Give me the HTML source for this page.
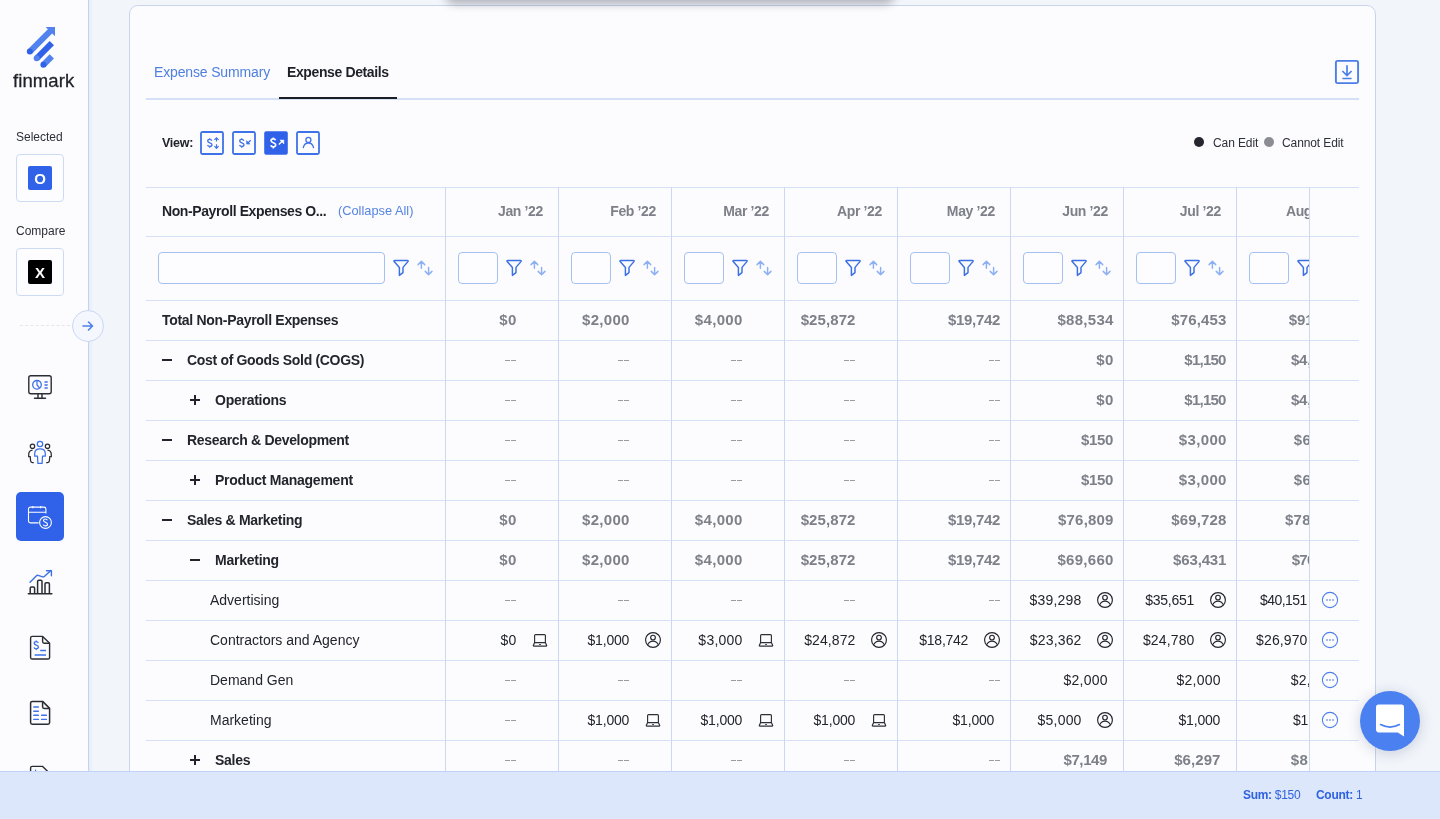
<!DOCTYPE html><html><head><meta charset="utf-8"><title>Finmark</title><style>
*{margin:0;padding:0;box-sizing:border-box}
html,body{width:1440px;height:819px;overflow:hidden}
body{position:relative;background:#f2f5fa;font-family:"Liberation Sans",sans-serif;color:#23252d}
.abs{position:absolute}
#wrap{position:absolute;left:0;top:0;width:1440px;height:819px;will-change:transform}
.t{position:absolute;white-space:nowrap;line-height:16px}
.b{font-weight:700}
.ic{position:absolute}
</style></head><body><div id="wrap">
<div class="abs" style="left:0;top:0;width:88px;height:819px;background:#fcfcfe"></div>
<div class="abs" style="left:88px;top:0;width:1px;height:819px;background:#c3d3f3"></div>
<div class="abs" style="left:89px;top:0;width:4px;height:819px;background:linear-gradient(90deg,#e3ebfa,#f2f5fa)"></div>
<svg class="abs" style="left:22px;top:22px" width="40" height="50" viewBox="0 0 40 50">
<path d="M7.8 29.6 L29.5 7.9" stroke="#5182ee" stroke-width="6" stroke-linecap="butt"/>
<circle cx="7.8" cy="29.6" r="3" fill="#2f62e8"/>
<path d="M23.6 4.9 L33 4.9 L33 14.3 Z" fill="#5182ee"/>
<path d="M14.7 36.3 L29.8 21.2" stroke="#2f62e8" stroke-width="6"/>
<circle cx="14.7" cy="36.3" r="3" fill="#5182ee"/>
<path d="M21.4 42.8 L29.8 34.4" stroke="#5182ee" stroke-width="6"/>
<circle cx="21.4" cy="42.8" r="3" fill="#2f62e8"/>
</svg>
<div class="t" style="left:13px;top:71px;font-size:18.5px;line-height:20px;letter-spacing:0.1px;color:#1f2128;font-weight:400;-webkit-text-stroke:0.3px #1f2128">finmark</div>
<div class="t" style="left:16px;top:129px;font-size:12px;color:#2e3038">Selected</div>
<div class="abs" style="left:16px;top:154px;width:48px;height:48px;border:1px solid #cddaf3;border-radius:4px;background:#fdfdff"></div>
<div class="abs" style="left:28px;top:166px;width:24px;height:24px;background:#2f62e8;border-radius:2px;color:#fff;font-weight:700;font-size:15px;line-height:25px;text-align:center">O</div>
<div class="t" style="left:16px;top:223px;font-size:12px;color:#2e3038">Compare</div>
<div class="abs" style="left:16px;top:248px;width:48px;height:48px;border:1px solid #cddaf3;border-radius:4px;background:#fdfdff"></div>
<div class="abs" style="left:28px;top:260px;width:24px;height:24px;background:#000;border-radius:2px;color:#fff;font-weight:700;font-size:15px;line-height:25px;text-align:center">X</div>
<div class="abs" style="left:20px;top:325px;width:50px;height:1px;border-top:1px dashed #e2e6ee"></div>
<div class="abs" style="left:72px;top:310px;width:32px;height:32px;border:1px solid #c9d7f3;border-radius:50%;background:#f4f7fd"></div>
<svg class="abs" style="left:80px;top:318px" width="16" height="16" viewBox="0 0 16 16"><path d="M3 8h9.5M8.5 4l4 4-4 4" fill="none" stroke="#4f80e8" stroke-width="1.6" stroke-linecap="round" stroke-linejoin="round"/></svg>
<svg class="abs" style="left:24px;top:370px" width="32" height="32" viewBox="0 0 32 32">
<rect x="4.8" y="5.8" width="22.4" height="18" rx="2" fill="none" stroke="#2b2d34" stroke-width="1.4"/>
<path d="M14 24v4M18 24v4M10.5 28.2h11" fill="none" stroke="#2b2d34" stroke-width="1.4" stroke-linecap="round"/>
<circle cx="13" cy="14.8" r="4.3" fill="none" stroke="#3e70e6" stroke-width="1.3"/>
<path d="M13 10.8v4.2l2.6 3" fill="none" stroke="#3e70e6" stroke-width="1.2"/>
<path d="M20.5 12h3.2M20.5 15h3.2M20.5 18h3.2" stroke="#3e70e6" stroke-width="1.3"/>
</svg>
<svg class="abs" style="left:24px;top:436px" width="32" height="32" viewBox="0 0 32 32">
<circle cx="16" cy="8" r="2.7" fill="none" stroke="#3e70e6" stroke-width="1.25"/>
<path d="M13.9 27.4H18.1L18.5 20.2H21.3V17.6C21.3 14.6 19 12.8 16 12.8S10.7 14.6 10.7 17.6V20.2H13.5Z" fill="none" stroke="#3e70e6" stroke-width="1.25" stroke-linejoin="round"/>
<circle cx="8.5" cy="10.2" r="2.2" fill="none" stroke="#2b2d34" stroke-width="1.25"/>
<circle cx="23.5" cy="10.2" r="2.2" fill="none" stroke="#2b2d34" stroke-width="1.25"/>
<path d="M8.6 14.2C6 14.5 4.7 16.3 4.7 18.4V20.6H6.2L6.6 24.8C6.7 25.9 7.3 26.5 8.4 26.5H9.8" fill="none" stroke="#2b2d34" stroke-width="1.25"/>
<path d="M23.4 14.2C26 14.5 27.3 16.3 27.3 18.4V20.6H25.8L25.4 24.8C25.3 25.9 24.7 26.5 23.6 26.5H22.2" fill="none" stroke="#2b2d34" stroke-width="1.25"/>
</svg>
<div class="abs" style="left:16px;top:492px;width:48px;height:49px;background:#2f62e8;border-radius:5px"></div>
<svg class="abs" style="left:24px;top:501px" width="32" height="32" viewBox="0 0 32 32">
<path d="M14.6 21.9H6.4a1.9 1.9 0 0 1-1.9-1.9V8a1.9 1.9 0 0 1 1.9-1.9H20a1.9 1.9 0 0 1 1.9 1.9V12.6" fill="none" stroke="#fff" stroke-width="1.1"/>
<path d="M4.5 11.2H21.9M8.9 4.9v2.4M16.7 4.9v2.4" fill="none" stroke="#fff" stroke-width="1.1"/>
<circle cx="21.5" cy="21.5" r="5.9" fill="#2f62e8" stroke="#fff" stroke-width="1.1"/>
<path d="M23.4 19.2c-.4-.8-1.1-1.2-2-1.2-1.1 0-1.9.7-1.9 1.6 0 2 4 1.3 4 3.6 0 1-.9 1.7-2.1 1.7-1 0-1.8-.5-2.1-1.3" fill="none" stroke="#fff" stroke-width="1.1"/>
</svg>
<svg class="abs" style="left:24px;top:566px" width="32" height="32" viewBox="0 0 32 32">
<path d="M4.3 27.7h23.6" stroke="#2b2d34" stroke-width="1.5" stroke-linecap="round"/>
<path d="M6.2 27.5v-5.2c0-.8.5-1.2 1.2-1.2h2c.7 0 1.2.4 1.2 1.2v5.2M13.6 27.5V15.4c0-.8.5-1.2 1.2-1.2h2c.7 0 1.2.4 1.2 1.2v12.1M21 27.5V18c0-.8.5-1.2 1.2-1.2h2c.7 0 1.2.4 1.2 1.2v9.5" fill="none" stroke="#2b2d34" stroke-width="1.5"/>
<path d="M6 16.3l6.5-6.6c.5-.5 1-.6 1.6-.4l4.6 1.5c.6.2 1.1.1 1.6-.4l6.6-6" fill="none" stroke="#3e70e6" stroke-width="1.4" stroke-linecap="round"/>
<path d="M22.5 4.8h4.9v4.9" fill="none" stroke="#3e70e6" stroke-width="1.4" stroke-linecap="round" stroke-linejoin="round"/>
</svg>
<svg class="abs" style="left:24px;top:631px" width="32" height="32" viewBox="0 0 32 32">
<path d="M18.6 5.4H8.2c-1 0-1.6.6-1.6 1.6v19.4c0 1 .6 1.6 1.6 1.6h15.8c1 0 1.6-.6 1.6-1.6V12.2z" fill="none" stroke="#2b2d34" stroke-width="1.4" stroke-linejoin="round"/>
<path d="M18.6 5.4v5.2c0 1 .6 1.6 1.6 1.6h5.4" fill="none" stroke="#2b2d34" stroke-width="1.4"/>
<path d="M14.3 11.9c-.4-.8-1.1-1.3-2.1-1.3-1.2 0-2 .7-2 1.7 0 2.2 4.2 1.4 4.2 3.7 0 1.1-.9 1.8-2.2 1.8-1.1 0-1.9-.5-2.2-1.4M12.2 9.4v1.2M12.2 17.8v1.2" fill="none" stroke="#3e70e6" stroke-width="1.3"/>
<path d="M16.2 19.6h5.8M10.6 24h11.4" stroke="#3e70e6" stroke-width="1.5"/>
</svg>
<svg class="abs" style="left:24px;top:696px" width="32" height="32" viewBox="0 0 32 32">
<path d="M18.6 5.4H8.2c-1 0-1.6.6-1.6 1.6v19.6c0 1 .6 1.6 1.6 1.6h15.8c1 0 1.6-.6 1.6-1.6V12.4z" fill="none" stroke="#2b2d34" stroke-width="1.5" stroke-linejoin="round"/>
<path d="M18.6 5.4v5.4c0 1 .6 1.6 1.6 1.6h5.4" fill="none" stroke="#2b2d34" stroke-width="1.5"/>
<path d="M9.8 11h4.6M9.8 15.2h4.6M9.8 19.2h4.6M9.8 23.4h4.6M17.6 19.2h4.8M17.6 23.4h4.8" stroke="#3e70e6" stroke-width="1.4" stroke-linecap="round"/>
</svg>
<svg class="abs" style="left:24px;top:761px" width="32" height="32" viewBox="0 0 32 32">
<path d="M18.6 5.4H8.2c-1 0-1.6.6-1.6 1.6v19.4c0 1 .6 1.6 1.6 1.6h15.8c1 0 1.6-.6 1.6-1.6V12.2z" fill="none" stroke="#2b2d34" stroke-width="1.4"/>
<path d="M11.5 8.6v2" stroke="#3e70e6" stroke-width="1.2"/>
</svg>
<div class="abs" style="left:129px;top:5px;width:1247px;height:830px;border:1px solid #c8d4ea;border-radius:9px;background:#fcfcfe"></div>
<div class="abs" style="left:447px;top:-30px;width:446px;height:30px;border-radius:8px;box-shadow:0 2px 9px 2px rgba(40,40,60,0.32)"></div>
<div class="t" style="left:154px;top:64px;font-size:14px;color:#4f80e0;letter-spacing:-0.15px">Expense Summary</div>
<div class="t b" style="left:287px;top:64px;font-size:14px;color:#1f2128;letter-spacing:-0.38px">Expense Details</div>
<div class="abs" style="left:146px;top:98px;width:1213px;height:1.6px;background:#d3e0f6"></div>
<div class="abs" style="left:279px;top:97.2px;width:118px;height:2.3px;background:#1c1e24"></div>
<svg class="abs" style="left:1334px;top:59px" width="26" height="26" viewBox="0 0 26 26">
<rect x="1.9" y="1.9" width="22.2" height="22.2" rx="1.5" fill="none" stroke="#4a7ee8" stroke-width="1.9"/>
<path d="M13 6.2v10.2M8.4 12l4.6 4.6 4.6-4.6M8.4 19.5h9.2" fill="none" stroke="#4a7ee8" stroke-width="1.7"/>
</svg>
<div class="t b" style="left:162px;top:135px;font-size:12.5px;color:#22242b;letter-spacing:-0.25px">View:</div>
<svg class="abs" style="left:200px;top:131px" width="24" height="24" viewBox="0 0 24 24">
<rect x="1" y="1" width="22" height="22" rx="1.5" fill="none" stroke="#3f72e8" stroke-width="1.8"/>
<path d="M11.9 9.6c-.4-.8-1.1-1.3-2.1-1.3-1.2 0-2.1.7-2.1 1.7 0 2.2 4.3 1.4 4.3 3.7 0 1.1-.9 1.8-2.2 1.8-1.1 0-2-.6-2.3-1.4M9.7 7.2v1.1M9.7 15.6v1.2" fill="none" stroke="#3f72e8" stroke-width="1.3"/>
<path d="M16.5 10.4V6.8M14.4 8.9l2.1-2.1 2.1 2.1M16.5 13.2v4.2M14.4 15.2l2.1 2.1 2.1-2.1" fill="none" stroke="#3f72e8" stroke-width="1.2"/>
</svg>
<svg class="abs" style="left:232px;top:131px" width="24" height="24" viewBox="0 0 24 24">
<rect x="1" y="1" width="22" height="22" rx="1.5" fill="none" stroke="#3f72e8" stroke-width="1.8"/>
<path d="M11.9 9.6c-.4-.8-1.1-1.3-2.1-1.3-1.2 0-2.1.7-2.1 1.7 0 2.2 4.3 1.4 4.3 3.7 0 1.1-.9 1.8-2.2 1.8-1.1 0-2-.6-2.3-1.4M9.7 7.2v1.1M9.7 15.6v1.2" fill="none" stroke="#3f72e8" stroke-width="1.3"/>
<path d="M18.7 9.2l-3.3 3.3" fill="none" stroke="#3f72e8" stroke-width="1.3"/>
<path d="M14.6 9.7v3.4h3.4z" fill="#3f72e8" stroke="#3f72e8" stroke-width="0.6" stroke-linejoin="round"/>
</svg>
<svg class="abs" style="left:264px;top:131px" width="24" height="24" viewBox="0 0 24 24">
<rect x="0.2" y="0.2" width="23.6" height="23.6" rx="2" fill="#2f62e8"/>
<path d="M11.6 9.3c-.4-.9-1.2-1.4-2.3-1.4-1.3 0-2.3.8-2.3 1.9 0 2.4 4.7 1.5 4.7 4 0 1.2-1 2-2.4 2-1.2 0-2.2-.6-2.5-1.6M9.3 6.4v1.4M9.3 15.9v1.6" fill="none" stroke="#fff" stroke-width="1.6"/>
<path d="M14.9 13.6l4-4" fill="none" stroke="#fff" stroke-width="1.4"/>
<path d="M16 9.1h3.8v3.8z" fill="#fff" stroke="#fff" stroke-width="0.6" stroke-linejoin="round"/>
</svg>
<svg class="abs" style="left:296px;top:131px" width="24" height="24" viewBox="0 0 24 24">
<rect x="1" y="1" width="22" height="22" rx="1.5" fill="none" stroke="#3f72e8" stroke-width="1.8"/>
<circle cx="12.4" cy="8.9" r="2.5" fill="none" stroke="#3f72e8" stroke-width="1.3"/>
<path d="M7.3 16.6c.6-2.9 2.6-4.6 5.1-4.6s4.5 1.7 5.1 4.6" fill="none" stroke="#3f72e8" stroke-width="1.3" stroke-linecap="round"/>
</svg>
<div class="abs" style="left:1194px;top:137px;width:10px;height:10px;border-radius:50%;background:#25262e"></div>
<div class="t" style="left:1213px;top:135px;font-size:12px;color:#2e3038;letter-spacing:-0.1px">Can Edit</div>
<div class="abs" style="left:1264px;top:137px;width:10px;height:10px;border-radius:50%;background:#8c8d94"></div>
<div class="t" style="left:1282px;top:135px;font-size:12px;color:#2e3038;letter-spacing:-0.1px">Cannot Edit</div>
<div class="abs" style="left:146px;top:187px;width:1213px;height:1px;background:#d3e0f6"></div>
<div class="abs" style="left:146px;top:236px;width:1213px;height:1px;background:#d3e0f6"></div>
<div class="abs" style="left:146px;top:300px;width:1213px;height:1px;background:#d3e0f6"></div>
<div class="abs" style="left:146px;top:340px;width:1213px;height:1px;background:#d3e0f6"></div>
<div class="abs" style="left:146px;top:380px;width:1213px;height:1px;background:#d3e0f6"></div>
<div class="abs" style="left:146px;top:420px;width:1213px;height:1px;background:#d3e0f6"></div>
<div class="abs" style="left:146px;top:460px;width:1213px;height:1px;background:#d3e0f6"></div>
<div class="abs" style="left:146px;top:500px;width:1213px;height:1px;background:#d3e0f6"></div>
<div class="abs" style="left:146px;top:540px;width:1213px;height:1px;background:#d3e0f6"></div>
<div class="abs" style="left:146px;top:580px;width:1213px;height:1px;background:#d3e0f6"></div>
<div class="abs" style="left:146px;top:620px;width:1213px;height:1px;background:#d3e0f6"></div>
<div class="abs" style="left:146px;top:660px;width:1213px;height:1px;background:#d3e0f6"></div>
<div class="abs" style="left:146px;top:700px;width:1213px;height:1px;background:#d3e0f6"></div>
<div class="abs" style="left:146px;top:740px;width:1213px;height:1px;background:#d3e0f6"></div>
<div class="abs" style="left:445px;top:187px;width:1px;height:600px;background:#cdd8f0"></div>
<div class="abs" style="left:558px;top:187px;width:1px;height:600px;background:#cdd8f0"></div>
<div class="abs" style="left:671px;top:187px;width:1px;height:600px;background:#cdd8f0"></div>
<div class="abs" style="left:784px;top:187px;width:1px;height:600px;background:#cdd8f0"></div>
<div class="abs" style="left:897px;top:187px;width:1px;height:600px;background:#cdd8f0"></div>
<div class="abs" style="left:1010px;top:187px;width:1px;height:600px;background:#cdd8f0"></div>
<div class="abs" style="left:1123px;top:187px;width:1px;height:600px;background:#cdd8f0"></div>
<div class="abs" style="left:1236px;top:187px;width:1px;height:600px;background:#cdd8f0"></div>
<div class="abs" style="left:1309px;top:187px;width:1px;height:600px;background:#cdd8f0"></div>
<div class="t b" style="left:162px;top:203px;font-size:14px;color:#1f2128;letter-spacing:-0.4px">Non-Payroll Expenses O...</div>
<div class="t" style="left:338px;top:203px;font-size:12.8px;color:#5684e2;letter-spacing:0px">(Collapse All)</div>
<div class="abs" style="left:158px;top:252px;width:227px;height:32px;border:1px solid #a5c0f1;border-radius:4px;background:#fdfdff"></div>
<svg class="ic" style="left:391px;top:256px" width="20" height="22" viewBox="0 0 20 22"><path d="M3.8 4.5H16.3Q17.7 4.5 16.9 5.6L12 11.4V16.6L8.4 19.4V11.4L3.2 5.6Q2.4 4.5 3.8 4.5Z" fill="none" stroke="#3b6fe4" stroke-width="1.45" stroke-linejoin="round"/></svg>
<svg class="ic" style="left:415px;top:257px" width="20" height="22" viewBox="0 0 20 22"><path d="M6.4 11.3V4.3M3.1 7.6L6.4 4.3L9.7 7.6M13.6 10.4V17.7M10.25 14.35L13.6 17.7L16.95 14.35" fill="none" stroke="#8db0f3" stroke-width="1.5" stroke-linecap="round" stroke-linejoin="round"/></svg>
<div class="abs" style="left:0;top:0;width:1309px;height:771px;overflow:hidden">
<div class="t b" style="right:766px;top:203px;font-size:14px;color:#7e8089;letter-spacing:-0.35px">Jan &rsquo;22</div>
<div class="abs" style="left:458px;top:252px;width:40px;height:32px;border:1px solid #a5c0f1;border-radius:4px;background:#fdfdff"></div>
<svg class="ic" style="left:504px;top:256px" width="20" height="22" viewBox="0 0 20 22"><path d="M3.8 4.5H16.3Q17.7 4.5 16.9 5.6L12 11.4V16.6L8.4 19.4V11.4L3.2 5.6Q2.4 4.5 3.8 4.5Z" fill="none" stroke="#3b6fe4" stroke-width="1.45" stroke-linejoin="round"/></svg>
<svg class="ic" style="left:528px;top:257px" width="20" height="22" viewBox="0 0 20 22"><path d="M6.4 11.3V4.3M3.1 7.6L6.4 4.3L9.7 7.6M13.6 10.4V17.7M10.25 14.35L13.6 17.7L16.95 14.35" fill="none" stroke="#8db0f3" stroke-width="1.5" stroke-linecap="round" stroke-linejoin="round"/></svg>
<div class="t b" style="right:653px;top:203px;font-size:14px;color:#7e8089;letter-spacing:-0.35px">Feb &rsquo;22</div>
<div class="abs" style="left:571px;top:252px;width:40px;height:32px;border:1px solid #a5c0f1;border-radius:4px;background:#fdfdff"></div>
<svg class="ic" style="left:617px;top:256px" width="20" height="22" viewBox="0 0 20 22"><path d="M3.8 4.5H16.3Q17.7 4.5 16.9 5.6L12 11.4V16.6L8.4 19.4V11.4L3.2 5.6Q2.4 4.5 3.8 4.5Z" fill="none" stroke="#3b6fe4" stroke-width="1.45" stroke-linejoin="round"/></svg>
<svg class="ic" style="left:641px;top:257px" width="20" height="22" viewBox="0 0 20 22"><path d="M6.4 11.3V4.3M3.1 7.6L6.4 4.3L9.7 7.6M13.6 10.4V17.7M10.25 14.35L13.6 17.7L16.95 14.35" fill="none" stroke="#8db0f3" stroke-width="1.5" stroke-linecap="round" stroke-linejoin="round"/></svg>
<div class="t b" style="right:540px;top:203px;font-size:14px;color:#7e8089;letter-spacing:-0.35px">Mar &rsquo;22</div>
<div class="abs" style="left:684px;top:252px;width:40px;height:32px;border:1px solid #a5c0f1;border-radius:4px;background:#fdfdff"></div>
<svg class="ic" style="left:730px;top:256px" width="20" height="22" viewBox="0 0 20 22"><path d="M3.8 4.5H16.3Q17.7 4.5 16.9 5.6L12 11.4V16.6L8.4 19.4V11.4L3.2 5.6Q2.4 4.5 3.8 4.5Z" fill="none" stroke="#3b6fe4" stroke-width="1.45" stroke-linejoin="round"/></svg>
<svg class="ic" style="left:754px;top:257px" width="20" height="22" viewBox="0 0 20 22"><path d="M6.4 11.3V4.3M3.1 7.6L6.4 4.3L9.7 7.6M13.6 10.4V17.7M10.25 14.35L13.6 17.7L16.95 14.35" fill="none" stroke="#8db0f3" stroke-width="1.5" stroke-linecap="round" stroke-linejoin="round"/></svg>
<div class="t b" style="right:427px;top:203px;font-size:14px;color:#7e8089;letter-spacing:-0.35px">Apr &rsquo;22</div>
<div class="abs" style="left:797px;top:252px;width:40px;height:32px;border:1px solid #a5c0f1;border-radius:4px;background:#fdfdff"></div>
<svg class="ic" style="left:843px;top:256px" width="20" height="22" viewBox="0 0 20 22"><path d="M3.8 4.5H16.3Q17.7 4.5 16.9 5.6L12 11.4V16.6L8.4 19.4V11.4L3.2 5.6Q2.4 4.5 3.8 4.5Z" fill="none" stroke="#3b6fe4" stroke-width="1.45" stroke-linejoin="round"/></svg>
<svg class="ic" style="left:867px;top:257px" width="20" height="22" viewBox="0 0 20 22"><path d="M6.4 11.3V4.3M3.1 7.6L6.4 4.3L9.7 7.6M13.6 10.4V17.7M10.25 14.35L13.6 17.7L16.95 14.35" fill="none" stroke="#8db0f3" stroke-width="1.5" stroke-linecap="round" stroke-linejoin="round"/></svg>
<div class="t b" style="right:314px;top:203px;font-size:14px;color:#7e8089;letter-spacing:-0.35px">May &rsquo;22</div>
<div class="abs" style="left:910px;top:252px;width:40px;height:32px;border:1px solid #a5c0f1;border-radius:4px;background:#fdfdff"></div>
<svg class="ic" style="left:956px;top:256px" width="20" height="22" viewBox="0 0 20 22"><path d="M3.8 4.5H16.3Q17.7 4.5 16.9 5.6L12 11.4V16.6L8.4 19.4V11.4L3.2 5.6Q2.4 4.5 3.8 4.5Z" fill="none" stroke="#3b6fe4" stroke-width="1.45" stroke-linejoin="round"/></svg>
<svg class="ic" style="left:980px;top:257px" width="20" height="22" viewBox="0 0 20 22"><path d="M6.4 11.3V4.3M3.1 7.6L6.4 4.3L9.7 7.6M13.6 10.4V17.7M10.25 14.35L13.6 17.7L16.95 14.35" fill="none" stroke="#8db0f3" stroke-width="1.5" stroke-linecap="round" stroke-linejoin="round"/></svg>
<div class="t b" style="right:201px;top:203px;font-size:14px;color:#7e8089;letter-spacing:-0.35px">Jun &rsquo;22</div>
<div class="abs" style="left:1023px;top:252px;width:40px;height:32px;border:1px solid #a5c0f1;border-radius:4px;background:#fdfdff"></div>
<svg class="ic" style="left:1069px;top:256px" width="20" height="22" viewBox="0 0 20 22"><path d="M3.8 4.5H16.3Q17.7 4.5 16.9 5.6L12 11.4V16.6L8.4 19.4V11.4L3.2 5.6Q2.4 4.5 3.8 4.5Z" fill="none" stroke="#3b6fe4" stroke-width="1.45" stroke-linejoin="round"/></svg>
<svg class="ic" style="left:1093px;top:257px" width="20" height="22" viewBox="0 0 20 22"><path d="M6.4 11.3V4.3M3.1 7.6L6.4 4.3L9.7 7.6M13.6 10.4V17.7M10.25 14.35L13.6 17.7L16.95 14.35" fill="none" stroke="#8db0f3" stroke-width="1.5" stroke-linecap="round" stroke-linejoin="round"/></svg>
<div class="t b" style="right:88px;top:203px;font-size:14px;color:#7e8089;letter-spacing:-0.35px">Jul &rsquo;22</div>
<div class="abs" style="left:1136px;top:252px;width:40px;height:32px;border:1px solid #a5c0f1;border-radius:4px;background:#fdfdff"></div>
<svg class="ic" style="left:1182px;top:256px" width="20" height="22" viewBox="0 0 20 22"><path d="M3.8 4.5H16.3Q17.7 4.5 16.9 5.6L12 11.4V16.6L8.4 19.4V11.4L3.2 5.6Q2.4 4.5 3.8 4.5Z" fill="none" stroke="#3b6fe4" stroke-width="1.45" stroke-linejoin="round"/></svg>
<svg class="ic" style="left:1206px;top:257px" width="20" height="22" viewBox="0 0 20 22"><path d="M6.4 11.3V4.3M3.1 7.6L6.4 4.3L9.7 7.6M13.6 10.4V17.7M10.25 14.35L13.6 17.7L16.95 14.35" fill="none" stroke="#8db0f3" stroke-width="1.5" stroke-linecap="round" stroke-linejoin="round"/></svg>
<div class="t b" style="right:-25px;top:203px;font-size:14px;color:#7e8089;letter-spacing:-0.35px">Aug &rsquo;22</div>
<div class="abs" style="left:1249px;top:252px;width:40px;height:32px;border:1px solid #a5c0f1;border-radius:4px;background:#fdfdff"></div>
<svg class="ic" style="left:1295px;top:256px" width="20" height="22" viewBox="0 0 20 22"><path d="M3.8 4.5H16.3Q17.7 4.5 16.9 5.6L12 11.4V16.6L8.4 19.4V11.4L3.2 5.6Q2.4 4.5 3.8 4.5Z" fill="none" stroke="#3b6fe4" stroke-width="1.45" stroke-linejoin="round"/></svg>
<svg class="ic" style="left:1319px;top:257px" width="20" height="22" viewBox="0 0 20 22"><path d="M6.4 11.3V4.3M3.1 7.6L6.4 4.3L9.7 7.6M13.6 10.4V17.7M10.25 14.35L13.6 17.7L16.95 14.35" fill="none" stroke="#8db0f3" stroke-width="1.5" stroke-linecap="round" stroke-linejoin="round"/></svg>
<div class="t b" style="right:792.14px;top:312px;font-size:15px;color:#7e8089;letter-spacing:0.456px">$0</div>
<div class="t b" style="right:679.30px;top:312px;font-size:15px;color:#7e8089;letter-spacing:0.302px">$2,000</div>
<div class="t b" style="right:566.25px;top:312px;font-size:15px;color:#7e8089;letter-spacing:0.352px">$4,000</div>
<div class="t b" style="right:453.52px;top:312px;font-size:15px;color:#7e8089;letter-spacing:0.081px">$25,872</div>
<div class="t b" style="right:308.89px;top:312px;font-size:15px;color:#7e8089;letter-spacing:-0.291px">$19,742</div>
<div class="t b" style="right:195.32px;top:312px;font-size:15px;color:#7e8089;letter-spacing:0.281px">$88,534</div>
<div class="t b" style="right:82.46px;top:312px;font-size:15px;color:#7e8089;letter-spacing:0.138px">$76,453</div>
<div class="t b" style="left:1288.8px;top:312px;font-size:15px;color:#7e8089;letter-spacing:-0.148px">$91,450</div>
<div class="abs" style="left:505px;top:360px;width:4.6px;height:1.4px;background:#9a9ca3"></div>
<div class="abs" style="left:511.3px;top:360px;width:4.6px;height:1.4px;background:#9a9ca3"></div>
<div class="abs" style="left:618px;top:360px;width:4.6px;height:1.4px;background:#9a9ca3"></div>
<div class="abs" style="left:624.3px;top:360px;width:4.6px;height:1.4px;background:#9a9ca3"></div>
<div class="abs" style="left:731px;top:360px;width:4.6px;height:1.4px;background:#9a9ca3"></div>
<div class="abs" style="left:737.3px;top:360px;width:4.6px;height:1.4px;background:#9a9ca3"></div>
<div class="abs" style="left:844px;top:360px;width:4.6px;height:1.4px;background:#9a9ca3"></div>
<div class="abs" style="left:850.3px;top:360px;width:4.6px;height:1.4px;background:#9a9ca3"></div>
<div class="abs" style="left:989px;top:360px;width:4.6px;height:1.4px;background:#9a9ca3"></div>
<div class="abs" style="left:995.3px;top:360px;width:4.6px;height:1.4px;background:#9a9ca3"></div>
<div class="t b" style="right:195.14px;top:352px;font-size:15px;color:#7e8089;letter-spacing:0.456px">$0</div>
<div class="t b" style="right:83.37px;top:352px;font-size:15px;color:#7e8089;letter-spacing:-0.765px">$1,150</div>
<div class="t b" style="left:1291px;top:352px;font-size:15px;color:#7e8089;letter-spacing:-0.248px">$4,150</div>
<div class="abs" style="left:505px;top:400px;width:4.6px;height:1.4px;background:#9a9ca3"></div>
<div class="abs" style="left:511.3px;top:400px;width:4.6px;height:1.4px;background:#9a9ca3"></div>
<div class="abs" style="left:618px;top:400px;width:4.6px;height:1.4px;background:#9a9ca3"></div>
<div class="abs" style="left:624.3px;top:400px;width:4.6px;height:1.4px;background:#9a9ca3"></div>
<div class="abs" style="left:731px;top:400px;width:4.6px;height:1.4px;background:#9a9ca3"></div>
<div class="abs" style="left:737.3px;top:400px;width:4.6px;height:1.4px;background:#9a9ca3"></div>
<div class="abs" style="left:844px;top:400px;width:4.6px;height:1.4px;background:#9a9ca3"></div>
<div class="abs" style="left:850.3px;top:400px;width:4.6px;height:1.4px;background:#9a9ca3"></div>
<div class="abs" style="left:989px;top:400px;width:4.6px;height:1.4px;background:#9a9ca3"></div>
<div class="abs" style="left:995.3px;top:400px;width:4.6px;height:1.4px;background:#9a9ca3"></div>
<div class="t b" style="right:195.14px;top:392px;font-size:15px;color:#7e8089;letter-spacing:0.456px">$0</div>
<div class="t b" style="right:83.37px;top:392px;font-size:15px;color:#7e8089;letter-spacing:-0.765px">$1,150</div>
<div class="t b" style="left:1291px;top:392px;font-size:15px;color:#7e8089;letter-spacing:-0.248px">$4,150</div>
<div class="abs" style="left:505px;top:440px;width:4.6px;height:1.4px;background:#9a9ca3"></div>
<div class="abs" style="left:511.3px;top:440px;width:4.6px;height:1.4px;background:#9a9ca3"></div>
<div class="abs" style="left:618px;top:440px;width:4.6px;height:1.4px;background:#9a9ca3"></div>
<div class="abs" style="left:624.3px;top:440px;width:4.6px;height:1.4px;background:#9a9ca3"></div>
<div class="abs" style="left:731px;top:440px;width:4.6px;height:1.4px;background:#9a9ca3"></div>
<div class="abs" style="left:737.3px;top:440px;width:4.6px;height:1.4px;background:#9a9ca3"></div>
<div class="abs" style="left:844px;top:440px;width:4.6px;height:1.4px;background:#9a9ca3"></div>
<div class="abs" style="left:850.3px;top:440px;width:4.6px;height:1.4px;background:#9a9ca3"></div>
<div class="abs" style="left:989px;top:440px;width:4.6px;height:1.4px;background:#9a9ca3"></div>
<div class="abs" style="left:995.3px;top:440px;width:4.6px;height:1.4px;background:#9a9ca3"></div>
<div class="t b" style="right:195.94px;top:432px;font-size:15px;color:#7e8089;letter-spacing:-0.344px">$150</div>
<div class="t b" style="right:82.27px;top:432px;font-size:15px;color:#7e8089;letter-spacing:0.335px">$3,000</div>
<div class="t b" style="left:1293.8px;top:432px;font-size:15px;color:#7e8089;letter-spacing:0.335px">$6,000</div>
<div class="abs" style="left:505px;top:480px;width:4.6px;height:1.4px;background:#9a9ca3"></div>
<div class="abs" style="left:511.3px;top:480px;width:4.6px;height:1.4px;background:#9a9ca3"></div>
<div class="abs" style="left:618px;top:480px;width:4.6px;height:1.4px;background:#9a9ca3"></div>
<div class="abs" style="left:624.3px;top:480px;width:4.6px;height:1.4px;background:#9a9ca3"></div>
<div class="abs" style="left:731px;top:480px;width:4.6px;height:1.4px;background:#9a9ca3"></div>
<div class="abs" style="left:737.3px;top:480px;width:4.6px;height:1.4px;background:#9a9ca3"></div>
<div class="abs" style="left:844px;top:480px;width:4.6px;height:1.4px;background:#9a9ca3"></div>
<div class="abs" style="left:850.3px;top:480px;width:4.6px;height:1.4px;background:#9a9ca3"></div>
<div class="abs" style="left:989px;top:480px;width:4.6px;height:1.4px;background:#9a9ca3"></div>
<div class="abs" style="left:995.3px;top:480px;width:4.6px;height:1.4px;background:#9a9ca3"></div>
<div class="t b" style="right:195.94px;top:472px;font-size:15px;color:#7e8089;letter-spacing:-0.344px">$150</div>
<div class="t b" style="right:82.27px;top:472px;font-size:15px;color:#7e8089;letter-spacing:0.335px">$3,000</div>
<div class="t b" style="left:1293.8px;top:472px;font-size:15px;color:#7e8089;letter-spacing:0.335px">$6,000</div>
<div class="t b" style="right:792.14px;top:512px;font-size:15px;color:#7e8089;letter-spacing:0.456px">$0</div>
<div class="t b" style="right:679.30px;top:512px;font-size:15px;color:#7e8089;letter-spacing:0.302px">$2,000</div>
<div class="t b" style="right:566.25px;top:512px;font-size:15px;color:#7e8089;letter-spacing:0.352px">$4,000</div>
<div class="t b" style="right:453.52px;top:512px;font-size:15px;color:#7e8089;letter-spacing:0.081px">$25,872</div>
<div class="t b" style="right:308.89px;top:512px;font-size:15px;color:#7e8089;letter-spacing:-0.291px">$19,742</div>
<div class="t b" style="right:195.40px;top:512px;font-size:15px;color:#7e8089;letter-spacing:0.195px">$76,809</div>
<div class="t b" style="right:82.46px;top:512px;font-size:15px;color:#7e8089;letter-spacing:0.138px">$69,728</div>
<div class="t b" style="left:1285px;top:512px;font-size:15px;color:#7e8089;letter-spacing:0.224px">$78,300</div>
<div class="t b" style="right:792.14px;top:552px;font-size:15px;color:#7e8089;letter-spacing:0.456px">$0</div>
<div class="t b" style="right:679.30px;top:552px;font-size:15px;color:#7e8089;letter-spacing:0.302px">$2,000</div>
<div class="t b" style="right:566.25px;top:552px;font-size:15px;color:#7e8089;letter-spacing:0.352px">$4,000</div>
<div class="t b" style="right:453.52px;top:552px;font-size:15px;color:#7e8089;letter-spacing:0.081px">$25,872</div>
<div class="t b" style="right:308.89px;top:552px;font-size:15px;color:#7e8089;letter-spacing:-0.291px">$19,742</div>
<div class="t b" style="right:195.30px;top:552px;font-size:15px;color:#7e8089;letter-spacing:0.295px">$69,660</div>
<div class="t b" style="right:82.75px;top:552px;font-size:15px;color:#7e8089;letter-spacing:-0.148px">$63,431</div>
<div class="t b" style="left:1291.7px;top:552px;font-size:15px;color:#7e8089;letter-spacing:-0.705px">$70,151</div>
<div class="abs" style="left:505px;top:600px;width:4.6px;height:1.4px;background:#9a9ca3"></div>
<div class="abs" style="left:511.3px;top:600px;width:4.6px;height:1.4px;background:#9a9ca3"></div>
<div class="abs" style="left:618px;top:600px;width:4.6px;height:1.4px;background:#9a9ca3"></div>
<div class="abs" style="left:624.3px;top:600px;width:4.6px;height:1.4px;background:#9a9ca3"></div>
<div class="abs" style="left:731px;top:600px;width:4.6px;height:1.4px;background:#9a9ca3"></div>
<div class="abs" style="left:737.3px;top:600px;width:4.6px;height:1.4px;background:#9a9ca3"></div>
<div class="abs" style="left:844px;top:600px;width:4.6px;height:1.4px;background:#9a9ca3"></div>
<div class="abs" style="left:850.3px;top:600px;width:4.6px;height:1.4px;background:#9a9ca3"></div>
<div class="abs" style="left:989px;top:600px;width:4.6px;height:1.4px;background:#9a9ca3"></div>
<div class="abs" style="left:995.3px;top:600px;width:4.6px;height:1.4px;background:#9a9ca3"></div>
<div class="t" style="right:227.39px;top:592px;font-size:14px;color:#23252d;letter-spacing:0.213px">$39,298</div>
<svg class="ic" style="left:1097px;top:592px" width="16" height="16" viewBox="0 0 16 16"><circle cx="8" cy="8" r="7.4" fill="none" stroke="#23252c" stroke-width="1.15"/><circle cx="8" cy="5.6" r="2.35" fill="none" stroke="#23252c" stroke-width="1.15"/><path d="M2.6 12.7C3.9 10.4 5.8 9.1 8 9.1S12.1 10.4 13.4 12.7" fill="none" stroke="#23252c" stroke-width="1.15"/></svg>
<div class="t" style="right:114.83px;top:592px;font-size:14px;color:#23252d;letter-spacing:-0.230px">$35,651</div>
<svg class="ic" style="left:1210px;top:592px" width="16" height="16" viewBox="0 0 16 16"><circle cx="8" cy="8" r="7.4" fill="none" stroke="#23252c" stroke-width="1.15"/><circle cx="8" cy="5.6" r="2.35" fill="none" stroke="#23252c" stroke-width="1.15"/><path d="M2.6 12.7C3.9 10.4 5.8 9.1 8 9.1S12.1 10.4 13.4 12.7" fill="none" stroke="#23252c" stroke-width="1.15"/></svg>
<div class="t" style="right:2.13px;top:592px;font-size:14px;color:#23252d;letter-spacing:-0.530px">$40,151</div>
<div class="t" style="right:792.24px;top:632px;font-size:14px;color:#23252d;letter-spacing:0.361px">$0</div>
<svg class="ic" style="left:532px;top:632px" width="16" height="16" viewBox="0 0 16 16"><path d="M2.6 10.6V3.6Q2.6 2.6 3.6 2.6H12.4Q13.4 2.6 13.4 3.6V10.6Z" fill="none" stroke="#2d2f36" stroke-width="1.15" stroke-linejoin="round"/><path d="M2.6 10.6L1.3 13.4Q1.1 14.1 1.9 14.1H14.1Q14.9 14.1 14.7 13.4L13.4 10.6" fill="none" stroke="#2d2f36" stroke-width="1.15" stroke-linejoin="round"/><ellipse cx="8" cy="12.5" rx="1.1" ry="0.6" fill="#2d2f36"/></svg>
<div class="t" style="right:679.79px;top:632px;font-size:14px;color:#23252d;letter-spacing:-0.188px">$1,000</div>
<svg class="ic" style="left:645px;top:632px" width="16" height="16" viewBox="0 0 16 16"><circle cx="8" cy="8" r="7.4" fill="none" stroke="#23252c" stroke-width="1.15"/><circle cx="8" cy="5.6" r="2.35" fill="none" stroke="#23252c" stroke-width="1.15"/><path d="M2.6 12.7C3.9 10.4 5.8 9.1 8 9.1S12.1 10.4 13.4 12.7" fill="none" stroke="#23252c" stroke-width="1.15"/></svg>
<div class="t" style="right:566.35px;top:632px;font-size:14px;color:#23252d;letter-spacing:0.245px">$3,000</div>
<svg class="ic" style="left:758px;top:632px" width="16" height="16" viewBox="0 0 16 16"><path d="M2.6 10.6V3.6Q2.6 2.6 3.6 2.6H12.4Q13.4 2.6 13.4 3.6V10.6Z" fill="none" stroke="#2d2f36" stroke-width="1.15" stroke-linejoin="round"/><path d="M2.6 10.6L1.3 13.4Q1.1 14.1 1.9 14.1H14.1Q14.9 14.1 14.7 13.4L13.4 10.6" fill="none" stroke="#2d2f36" stroke-width="1.15" stroke-linejoin="round"/><ellipse cx="8" cy="12.5" rx="1.1" ry="0.6" fill="#2d2f36"/></svg>
<div class="t" style="right:453.50px;top:632px;font-size:14px;color:#23252d;letter-spacing:0.099px">$24,872</div>
<svg class="ic" style="left:871px;top:632px" width="16" height="16" viewBox="0 0 16 16"><circle cx="8" cy="8" r="7.4" fill="none" stroke="#23252c" stroke-width="1.15"/><circle cx="8" cy="5.6" r="2.35" fill="none" stroke="#23252c" stroke-width="1.15"/><path d="M2.6 12.7C3.9 10.4 5.8 9.1 8 9.1S12.1 10.4 13.4 12.7" fill="none" stroke="#23252c" stroke-width="1.15"/></svg>
<div class="t" style="right:340.84px;top:632px;font-size:14px;color:#23252d;letter-spacing:-0.244px">$18,742</div>
<svg class="ic" style="left:984px;top:632px" width="16" height="16" viewBox="0 0 16 16"><circle cx="8" cy="8" r="7.4" fill="none" stroke="#23252c" stroke-width="1.15"/><circle cx="8" cy="5.6" r="2.35" fill="none" stroke="#23252c" stroke-width="1.15"/><path d="M2.6 12.7C3.9 10.4 5.8 9.1 8 9.1S12.1 10.4 13.4 12.7" fill="none" stroke="#23252c" stroke-width="1.15"/></svg>
<div class="t" style="right:227.43px;top:632px;font-size:14px;color:#23252d;letter-spacing:0.170px">$23,362</div>
<svg class="ic" style="left:1097px;top:632px" width="16" height="16" viewBox="0 0 16 16"><circle cx="8" cy="8" r="7.4" fill="none" stroke="#23252c" stroke-width="1.15"/><circle cx="8" cy="5.6" r="2.35" fill="none" stroke="#23252c" stroke-width="1.15"/><path d="M2.6 12.7C3.9 10.4 5.8 9.1 8 9.1S12.1 10.4 13.4 12.7" fill="none" stroke="#23252c" stroke-width="1.15"/></svg>
<div class="t" style="right:114.46px;top:632px;font-size:14px;color:#23252d;letter-spacing:0.142px">$24,780</div>
<svg class="ic" style="left:1210px;top:632px" width="16" height="16" viewBox="0 0 16 16"><circle cx="8" cy="8" r="7.4" fill="none" stroke="#23252c" stroke-width="1.15"/><circle cx="8" cy="5.6" r="2.35" fill="none" stroke="#23252c" stroke-width="1.15"/><path d="M2.6 12.7C3.9 10.4 5.8 9.1 8 9.1S12.1 10.4 13.4 12.7" fill="none" stroke="#23252c" stroke-width="1.15"/></svg>
<div class="t" style="right:1.49px;top:632px;font-size:14px;color:#23252d;letter-spacing:0.113px">$26,970</div>
<div class="abs" style="left:505px;top:680px;width:4.6px;height:1.4px;background:#9a9ca3"></div>
<div class="abs" style="left:511.3px;top:680px;width:4.6px;height:1.4px;background:#9a9ca3"></div>
<div class="abs" style="left:618px;top:680px;width:4.6px;height:1.4px;background:#9a9ca3"></div>
<div class="abs" style="left:624.3px;top:680px;width:4.6px;height:1.4px;background:#9a9ca3"></div>
<div class="abs" style="left:731px;top:680px;width:4.6px;height:1.4px;background:#9a9ca3"></div>
<div class="abs" style="left:737.3px;top:680px;width:4.6px;height:1.4px;background:#9a9ca3"></div>
<div class="abs" style="left:844px;top:680px;width:4.6px;height:1.4px;background:#9a9ca3"></div>
<div class="abs" style="left:850.3px;top:680px;width:4.6px;height:1.4px;background:#9a9ca3"></div>
<div class="abs" style="left:989px;top:680px;width:4.6px;height:1.4px;background:#9a9ca3"></div>
<div class="abs" style="left:995.3px;top:680px;width:4.6px;height:1.4px;background:#9a9ca3"></div>
<div class="t" style="right:201.39px;top:672px;font-size:14px;color:#23252d;letter-spacing:0.212px">$2,000</div>
<div class="t" style="right:88.39px;top:672px;font-size:14px;color:#23252d;letter-spacing:0.212px">$2,000</div>
<div class="t" style="left:1290.8px;top:672px;font-size:14px;color:#23252d;letter-spacing:0.212px">$2,000</div>
<div class="abs" style="left:505px;top:720px;width:4.6px;height:1.4px;background:#9a9ca3"></div>
<div class="abs" style="left:511.3px;top:720px;width:4.6px;height:1.4px;background:#9a9ca3"></div>
<div class="t" style="right:679.79px;top:712px;font-size:14px;color:#23252d;letter-spacing:-0.188px">$1,000</div>
<svg class="ic" style="left:645px;top:712px" width="16" height="16" viewBox="0 0 16 16"><path d="M2.6 10.6V3.6Q2.6 2.6 3.6 2.6H12.4Q13.4 2.6 13.4 3.6V10.6Z" fill="none" stroke="#2d2f36" stroke-width="1.15" stroke-linejoin="round"/><path d="M2.6 10.6L1.3 13.4Q1.1 14.1 1.9 14.1H14.1Q14.9 14.1 14.7 13.4L13.4 10.6" fill="none" stroke="#2d2f36" stroke-width="1.15" stroke-linejoin="round"/><ellipse cx="8" cy="12.5" rx="1.1" ry="0.6" fill="#2d2f36"/></svg>
<div class="t" style="right:566.79px;top:712px;font-size:14px;color:#23252d;letter-spacing:-0.188px">$1,000</div>
<svg class="ic" style="left:758px;top:712px" width="16" height="16" viewBox="0 0 16 16"><path d="M2.6 10.6V3.6Q2.6 2.6 3.6 2.6H12.4Q13.4 2.6 13.4 3.6V10.6Z" fill="none" stroke="#2d2f36" stroke-width="1.15" stroke-linejoin="round"/><path d="M2.6 10.6L1.3 13.4Q1.1 14.1 1.9 14.1H14.1Q14.9 14.1 14.7 13.4L13.4 10.6" fill="none" stroke="#2d2f36" stroke-width="1.15" stroke-linejoin="round"/><ellipse cx="8" cy="12.5" rx="1.1" ry="0.6" fill="#2d2f36"/></svg>
<div class="t" style="right:453.79px;top:712px;font-size:14px;color:#23252d;letter-spacing:-0.188px">$1,000</div>
<svg class="ic" style="left:871px;top:712px" width="16" height="16" viewBox="0 0 16 16"><path d="M2.6 10.6V3.6Q2.6 2.6 3.6 2.6H12.4Q13.4 2.6 13.4 3.6V10.6Z" fill="none" stroke="#2d2f36" stroke-width="1.15" stroke-linejoin="round"/><path d="M2.6 10.6L1.3 13.4Q1.1 14.1 1.9 14.1H14.1Q14.9 14.1 14.7 13.4L13.4 10.6" fill="none" stroke="#2d2f36" stroke-width="1.15" stroke-linejoin="round"/><ellipse cx="8" cy="12.5" rx="1.1" ry="0.6" fill="#2d2f36"/></svg>
<div class="t" style="right:314.79px;top:712px;font-size:14px;color:#23252d;letter-spacing:-0.188px">$1,000</div>
<div class="t" style="right:227.40px;top:712px;font-size:14px;color:#23252d;letter-spacing:0.195px">$5,000</div>
<svg class="ic" style="left:1097px;top:712px" width="16" height="16" viewBox="0 0 16 16"><circle cx="8" cy="8" r="7.4" fill="none" stroke="#23252c" stroke-width="1.15"/><circle cx="8" cy="5.6" r="2.35" fill="none" stroke="#23252c" stroke-width="1.15"/><path d="M2.6 12.7C3.9 10.4 5.8 9.1 8 9.1S12.1 10.4 13.4 12.7" fill="none" stroke="#23252c" stroke-width="1.15"/></svg>
<div class="t" style="right:88.79px;top:712px;font-size:14px;color:#23252d;letter-spacing:-0.188px">$1,000</div>
<div class="t" style="left:1293px;top:712px;font-size:14px;color:#23252d;letter-spacing:-0.188px">$1,000</div>
<div class="abs" style="left:505px;top:760px;width:4.6px;height:1.4px;background:#9a9ca3"></div>
<div class="abs" style="left:511.3px;top:760px;width:4.6px;height:1.4px;background:#9a9ca3"></div>
<div class="abs" style="left:618px;top:760px;width:4.6px;height:1.4px;background:#9a9ca3"></div>
<div class="abs" style="left:624.3px;top:760px;width:4.6px;height:1.4px;background:#9a9ca3"></div>
<div class="abs" style="left:731px;top:760px;width:4.6px;height:1.4px;background:#9a9ca3"></div>
<div class="abs" style="left:737.3px;top:760px;width:4.6px;height:1.4px;background:#9a9ca3"></div>
<div class="abs" style="left:844px;top:760px;width:4.6px;height:1.4px;background:#9a9ca3"></div>
<div class="abs" style="left:850.3px;top:760px;width:4.6px;height:1.4px;background:#9a9ca3"></div>
<div class="abs" style="left:989px;top:760px;width:4.6px;height:1.4px;background:#9a9ca3"></div>
<div class="abs" style="left:995.3px;top:760px;width:4.6px;height:1.4px;background:#9a9ca3"></div>
<div class="t b" style="right:201.98px;top:752px;font-size:15px;color:#7e8089;letter-spacing:-0.382px">$7,149</div>
<div class="t b" style="right:88.53px;top:752px;font-size:15px;color:#7e8089;letter-spacing:0.068px">$6,297</div>
<div class="t b" style="left:1290.8px;top:752px;font-size:15px;color:#7e8089;letter-spacing:0.335px">$8,400</div>
</div>
<div class="t b" style="left:162px;top:312px;font-size:14px;color:#23252d;letter-spacing:-0.3px">Total Non-Payroll Expenses</div>
<div class="abs" style="left:162px;top:359px;width:10px;height:2px;background:#23252d"></div>
<div class="t b" style="left:187px;top:352px;font-size:14px;color:#23252d;letter-spacing:-0.32px">Cost of Goods Sold (COGS)</div>
<div class="abs" style="left:190px;top:399px;width:10px;height:2px;background:#23252d"></div>
<div class="abs" style="left:194px;top:395px;width:2px;height:10px;background:#23252d"></div>
<div class="t b" style="left:215px;top:392px;font-size:14px;color:#23252d;letter-spacing:-0.25px">Operations</div>
<div class="abs" style="left:162px;top:439px;width:10px;height:2px;background:#23252d"></div>
<div class="t b" style="left:187px;top:432px;font-size:14px;color:#23252d;letter-spacing:-0.32px">Research &amp; Development</div>
<div class="abs" style="left:190px;top:479px;width:10px;height:2px;background:#23252d"></div>
<div class="abs" style="left:194px;top:475px;width:2px;height:10px;background:#23252d"></div>
<div class="t b" style="left:215px;top:472px;font-size:14px;color:#23252d;letter-spacing:-0.25px">Product Management</div>
<div class="abs" style="left:162px;top:519px;width:10px;height:2px;background:#23252d"></div>
<div class="t b" style="left:187px;top:512px;font-size:14px;color:#23252d;letter-spacing:-0.32px">Sales &amp; Marketing</div>
<div class="abs" style="left:190px;top:559px;width:10px;height:2px;background:#23252d"></div>
<div class="t b" style="left:215px;top:552px;font-size:14px;color:#23252d;letter-spacing:-0.25px">Marketing</div>
<div class="t" style="left:210px;top:592px;font-size:14px;color:#23252d;letter-spacing:0px">Advertising</div>
<svg class="ic" style="left:1321px;top:591px" width="18" height="18" viewBox="0 0 18 18"><circle cx="9" cy="9" r="7.6" fill="none" stroke="#4f80e8" stroke-width="1.1"/><circle cx="6" cy="9" r="0.8" fill="#3d66c8"/><circle cx="9" cy="9" r="0.8" fill="#3d66c8"/><circle cx="12" cy="9" r="0.8" fill="#3d66c8"/></svg>
<div class="t" style="left:210px;top:632px;font-size:14px;color:#23252d;letter-spacing:0px">Contractors and Agency</div>
<svg class="ic" style="left:1321px;top:631px" width="18" height="18" viewBox="0 0 18 18"><circle cx="9" cy="9" r="7.6" fill="none" stroke="#4f80e8" stroke-width="1.1"/><circle cx="6" cy="9" r="0.8" fill="#3d66c8"/><circle cx="9" cy="9" r="0.8" fill="#3d66c8"/><circle cx="12" cy="9" r="0.8" fill="#3d66c8"/></svg>
<div class="t" style="left:210px;top:672px;font-size:14px;color:#23252d;letter-spacing:0px">Demand Gen</div>
<svg class="ic" style="left:1321px;top:671px" width="18" height="18" viewBox="0 0 18 18"><circle cx="9" cy="9" r="7.6" fill="none" stroke="#4f80e8" stroke-width="1.1"/><circle cx="6" cy="9" r="0.8" fill="#3d66c8"/><circle cx="9" cy="9" r="0.8" fill="#3d66c8"/><circle cx="12" cy="9" r="0.8" fill="#3d66c8"/></svg>
<div class="t" style="left:210px;top:712px;font-size:14px;color:#23252d;letter-spacing:0px">Marketing</div>
<svg class="ic" style="left:1321px;top:711px" width="18" height="18" viewBox="0 0 18 18"><circle cx="9" cy="9" r="7.6" fill="none" stroke="#4f80e8" stroke-width="1.1"/><circle cx="6" cy="9" r="0.8" fill="#3d66c8"/><circle cx="9" cy="9" r="0.8" fill="#3d66c8"/><circle cx="12" cy="9" r="0.8" fill="#3d66c8"/></svg>
<div class="abs" style="left:190px;top:759px;width:10px;height:2px;background:#23252d"></div>
<div class="abs" style="left:194px;top:755px;width:2px;height:10px;background:#23252d"></div>
<div class="t b" style="left:215px;top:752px;font-size:14px;color:#23252d;letter-spacing:-0.25px">Sales</div>
<div class="abs" style="left:0;top:771px;width:1440px;height:48px;background:#dce7fb;border-top:1px solid #c0d3f7"></div>
<div class="t" style="left:1243px;top:787px;font-size:12px;color:#2f62e0;letter-spacing:-0.3px"><b>Sum:</b> $150</div>
<div class="t" style="left:1316px;top:787px;font-size:12px;color:#2f62e0;letter-spacing:-0.3px"><b>Count:</b> 1</div>
<div class="abs" style="left:1360px;top:691px;width:60px;height:60px;border-radius:50%;background:#4a80f0;box-shadow:0 2px 14px rgba(40,60,110,0.22)"></div>
<svg class="abs" style="left:1370px;top:701px" width="40" height="40" viewBox="0 0 40 40">
<path d="M8.8 3.6h22.4a2.8 2.8 0 0 1 2.8 2.8V35.4l-6.2-4H8.8A2.8 2.8 0 0 1 6 28.6V6.4a2.8 2.8 0 0 1 2.8-2.8z" fill="#fff"/>
<path d="M10.6 23.6Q20 28.8 29.4 23.6" fill="none" stroke="#4a80f0" stroke-width="1.7" stroke-linecap="round"/>
</svg>
</div></body></html>
